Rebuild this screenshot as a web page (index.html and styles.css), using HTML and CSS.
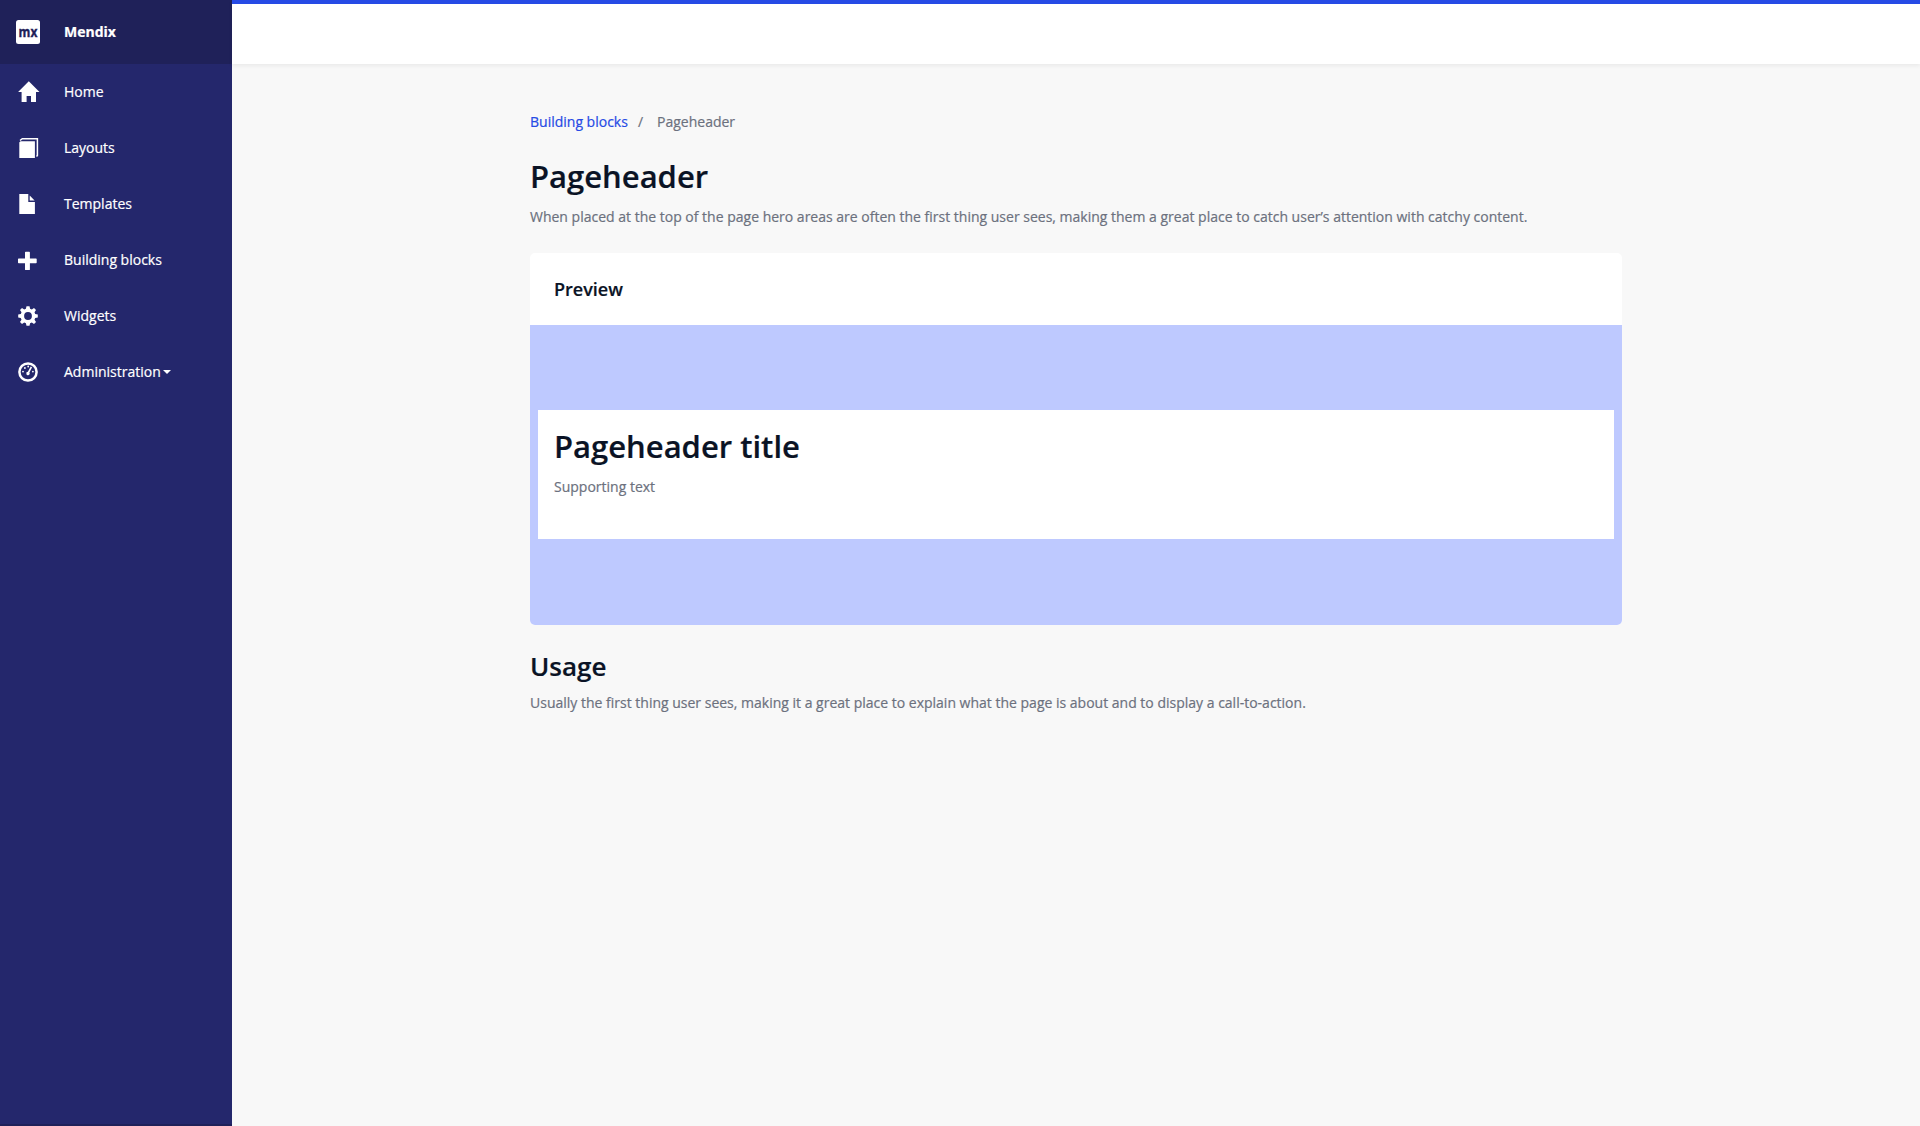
FILE: index.html
```html
<!DOCTYPE html>
<html lang="en">
<head>
<meta charset="utf-8">
<title>Pageheader</title>
<link rel="stylesheet" href="styles.css">
</head>
<body>
<div class="app">
  <aside class="sidebar">
    <div class="brand">
      <svg class="icon" width="24" height="24" viewBox="0 0 24 24"><rect width="24" height="24" rx="2.5" fill="#fff"/><text class="logo-text" x="2.6" y="16.500" textLength="18.800" lengthAdjust="spacingAndGlyphs">mx</text></svg>
      <span>Mendix</span>
    </div>
    <nav class="nav">
      <a class="nav-item"><svg class="icon" width="24" height="24" viewBox="0 0 24 24"><path d="M12.8 1.3 23.5 12H20v9.9h-5v-6h-4.400v6h-5V12H2.100z"/></svg><span>Home</span></a>
      <a class="nav-item"><svg class="icon" width="24" height="24" viewBox="0 0 24 24"><path d="M3.300 6.500 4.500 5.200h14.400V22H3.300z"/><path d="M4 4.500 6.300 2.700H21.400V19.500L20.500 20.500" fill="none" stroke="#fff" stroke-width="1.500"/></svg><span>Layouts</span></a>
      <a class="nav-item"><svg class="icon" width="24" height="24" viewBox="0 0 24 24"><path d="M3.300 2H12.300v8h6.600v12H3.300zM13.700 3.500l4.900 5h-4.900z"/></svg><span>Templates</span></a>
      <a class="nav-item"><svg class="icon" width="24" height="24" viewBox="0 0 24 24"><path d="M9.700 3.700h3.500a.7.700 0 0 1 .7.700v6h6.100a.7.700 0 0 1 .7.700v3.400a.7.700 0 0 1-.7.700h-6.100v6.200a.7.700 0 0 1-.7.700H9.700a.7.700 0 0 1-.7-.7v-6.200H2.700a.7.700 0 0 1-.7-.7v-3.400a.7.700 0 0 1 .7-.7H9v-6a.7.700 0 0 1 .7-.7z"/></svg><span>Building blocks</span></a>
      <a class="nav-item"><svg class="icon" width="24" height="24" viewBox="-12 -12 24 24"><path fill-rule="evenodd" d="M-1.500-9.800h3L2.100-7.200 3.800-6.500 6-8 8-6 6.500-3.800 7.200-2.100 9.800-1.500v3L7.200 2.100 6.500 3.800 8 6 6 8 3.800 6.500 2.100 7.200 1.500 9.800h-3L-2.100 7.200-3.800 6.500-6 8-8 6-6.500 3.800-7.200 2.100-9.800 1.500v-3L-7.200-2.100-6.500-3.800-8-6-6-8-3.800-6.500-2.100-7.200zM0-3.900a3.900 3.900 0 1 0 0 7.800 3.900 3.900 0 1 0 0-7.800z"/></svg><span>Widgets</span></a>
      <a class="nav-item"><svg class="icon" width="24" height="24" viewBox="0 0 24 24"><circle cx="12" cy="12" r="8.600" fill="none" stroke="#fff" stroke-width="2.500"/><circle cx="7" cy="11.600" r=".9"/><circle cx="8.900" cy="8" r=".9"/><circle cx="12.200" cy="6.500" r=".9"/><circle cx="16.900" cy="11.600" r=".9"/><path d="M14.700 6.500 16.100 7.200 13.400 12.500a1.700 1.700 0 1 1-1.500-.7z"/></svg><span>Administration</span><i class="caret"></i></a>
    </nav>
    <div class="sidebar-foot"></div>
  </aside>
  <div class="page">
    <header class="topbar"></header>
    <main class="content">
      <div class="breadcrumb"><a class="crumb-link">Building blocks</a><span class="slash">/</span><span>Pageheader</span></div>
      <h1 class="title">Pageheader</h1>
      <p class="text">When placed at the top of the page hero areas are often the first thing user sees, making them a great place to catch user’s attention with catchy content.</p>
      <section class="card">
        <h4 class="card-head">Preview</h4>
        <div class="stage">
          <div class="pageheader">
            <h1 class="title">Pageheader title</h1>
            <p class="text">Supporting text</p>
          </div>
        </div>
      </section>
      <h2 class="subtitle">Usage</h2>
      <p class="text">Usually the first thing user sees, making it a great place to explain what the page is about and to display a call-to-action.</p>
    </main>
  </div>
</div>
</body>
</html>
```
FILE: styles.css
```css
* { box-sizing: border-box; }
body {
  margin: 0;
  font: 14px/20px "Open Sans", sans-serif;
  color: #6c717e;
  background: #f8f8f8;
  -webkit-text-stroke: .2px currentColor;
}
h1, h2, h4, p { margin: 0; }
.app { display: flex; height: 1126px; }
.sidebar {
  width: 232px;
  flex: none;
  display: flex;
  flex-direction: column;
  background: #24276c;
  color: #fff;
}
.brand, .nav-item {
  display: flex;
  align-items: center;
  padding-left: 16px;
}
.brand {
  height: 64px;
  background: #1f2159;
  font-weight: 700;
}
.nav { flex: 1; }
.nav-item { height: 56px; }
.icon { margin-right: 24px; fill: #fff; }
.logo-text {
  font: 700 15px "Open Sans", sans-serif;
  fill: #1f2159;
  stroke: #1f2159;
  stroke-width: .4px;
}
.caret {
  margin-left: 2px;
  border: 4px solid transparent;
  border-top-color: #fff;
  border-bottom: 0;
}
.sidebar-foot { height: 2px; background: #1f2159; }
.page { flex: 1; }
.topbar {
  height: 64px;
  background: #fff;
  border-top: 4px solid #264ae5;
  box-shadow: 0 2px 4px rgba(0, 0, 0, .06);
}
.content { width: 1092px; margin: 0 auto; padding-top: 48px; }
.breadcrumb { display: flex; }
.crumb-link { color: #264ae5; }
.slash { margin: 0 14px 0 10px; }
.title {
  margin-top: 25px;
  font-size: 31px;
  line-height: 38px;
  font-weight: 600;
  color: #0a1325;
}
.title + .text { margin-top: 12px; }
.card {
  margin-top: 26px;
  border-radius: 5px;
  overflow: hidden;
  background: #fff;
}
.card-head {
  height: 72px;
  padding: 24px;
  font-size: 18px;
  line-height: 24px;
  font-weight: 600;
  color: #0a1325;
}
.stage {
  height: 300px;
  padding: 85px 8px 86px;
  background: #bec9ff;
}
.pageheader { height: 129px; padding: 17px 16px; background: #fff; }
.pageheader .title { margin-top: 0; }
.subtitle {
  margin-top: 25px;
  font-size: 26px;
  line-height: 32px;
  font-weight: 600;
  color: #0a1325;
}
.subtitle + .text { margin-top: 11px; }
```
